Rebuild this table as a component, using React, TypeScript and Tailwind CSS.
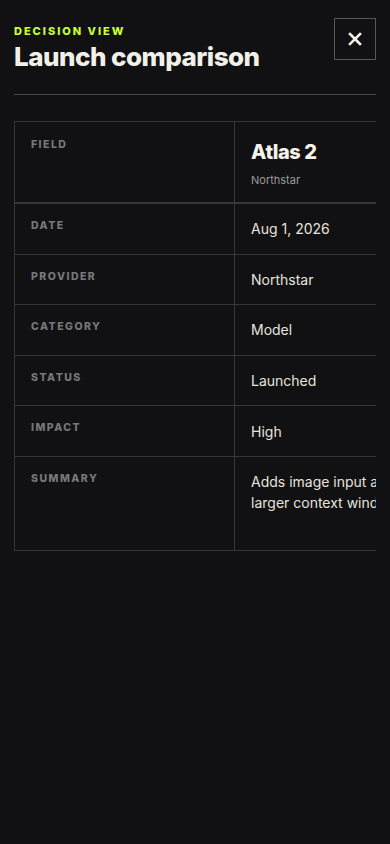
import React from "react";

const rows: { label: string; value: string; tall?: boolean }[] = [
  { label: "Date", value: "Aug 1, 2026" },
  { label: "Provider", value: "Northstar" },
  { label: "Category", value: "Model" },
  { label: "Status", value: "Launched" },
  { label: "Impact", value: "High" },
  { label: "Summary", value: "Adds image input and a larger context window.", tall: true },
];

export default function App() {
  return (
    <div
      className="min-h-[844px] w-full bg-[#111113] px-[14px] pt-[18px] text-[#f1efe8]"
      style={{ fontFamily: "Inter, 'Liberation Sans', sans-serif" }}
    >
      <div className="flex items-start justify-between">
        <div className="pt-[5px]">
          <div className="text-[11px] font-extrabold uppercase leading-[16px] tracking-[0.18em] text-[#c8ff2e]">
            Decision View
          </div>
          <h1 className="mt-[2px] text-[26px] font-extrabold leading-[32px] tracking-[-0.02em] text-[#f3f0e8]">
            Launch comparison
          </h1>
        </div>
        <button className="flex h-[42px] w-[42px] items-center justify-center border border-[#55555a] text-[#f3f0e8]">
          <svg width="14" height="14" viewBox="0 0 14 14" fill="none">
            <path d="M2 2L12 12M12 2L2 12" stroke="currentColor" strokeWidth="2.6" strokeLinecap="square" />
          </svg>
        </button>
      </div>
      <div className="mt-[21px] h-px bg-[#48484c]" />
      <div className="mt-[26px] overflow-x-auto [scrollbar-width:none]">
        <div className="w-[480px] border border-[#37373a]">
          <div className="flex border-b-2 border-[#37373a]">
            <div className="w-[220px] shrink-0 border-r border-[#37373a] px-4 pt-[17px] pb-[14px]">
              <div className="text-[10.5px] font-extrabold uppercase leading-[12px] tracking-[0.14em] text-[#77777a]">
                Field
              </div>
            </div>
            <div className="w-[260px] shrink-0 px-4 pt-4 pb-[14px]">
              <div className="text-[20px] font-extrabold leading-[28px] tracking-[-0.02em] text-[#f6f3ea]">Atlas 2</div>
              <div className="mt-[6px] text-[11px] leading-[16px] text-[#9a9a9c]">Northstar</div>
            </div>
          </div>
          {rows.map((r, i) => (
            <div
              key={r.label}
              className={`flex ${i < rows.length - 1 ? "border-b border-[#37373a]" : ""} ${r.tall ? "min-h-[93px]" : ""}`}
            >
              <div className="w-[220px] shrink-0 border-r border-[#37373a] px-4 pt-[16px]">
                <div className="text-[10.5px] font-extrabold uppercase leading-[12px] tracking-[0.14em] text-[#77777a]">
                  {r.label}
                </div>
              </div>
              <div className="w-[200px] shrink-0 px-4 py-[14.3px] text-[14px] leading-[21px] text-[#e6e3dc]">
                {r.value}
              </div>
            </div>
          ))}
        </div>
      </div>
    </div>
  );
}
